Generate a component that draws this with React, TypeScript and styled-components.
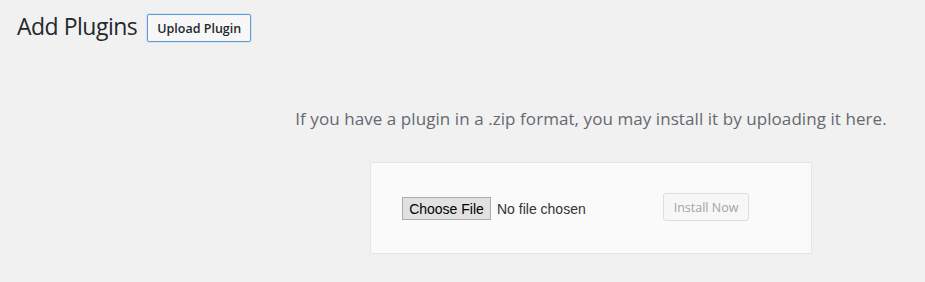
import React from "react";
import styled, { createGlobalStyle } from "styled-components";

const GlobalStyle = createGlobalStyle`
  html, body {
    margin: 0;
    padding: 0;
    background: #f1f1f1;
  }
  body {
    font-family: "Open Sans", "Noto Sans", sans-serif;
    color: #23282d;
  }
`;

const Page = styled.div`
  width: 925px;
  height: 282px;
  box-sizing: border-box;
  padding: 11px 0 0 17px;
  overflow: hidden;
`;

const TitleRow = styled.div`
  display: flex;
  align-items: flex-start;
  gap: 10px;
`;

const Title = styled.h1`
  margin: 0;
  font-size: 23px;
  font-weight: 400;
  line-height: 30px;
  color: #23282d;
  letter-spacing: -0.5px;
`;

const TitleAction = styled.button`
  font-family: "Open Sans", "Noto Sans", sans-serif;
  font-size: 12.5px;
  font-weight: 600;
  color: #23282d;
  background: #f7f7f7;
  border: 1px solid #5b9dd9;
  border-radius: 2px;
  height: 28px;
  margin-top: 3px;
  padding: 0 9px;
  box-shadow: 0 0 0 1px rgba(91, 157, 217, 0.15);
  cursor: pointer;
`;

const UploadSection = styled.section`
  margin-left: 240px;
  padding-top: 65px;
  display: flex;
  flex-direction: column;
  align-items: center;
`;

const Help = styled.p`
  margin: 0;
  font-size: 17px;
  line-height: 24px;
  color: #646970;
  letter-spacing: 0.07px;
  white-space: nowrap;
`;

const UploadForm = styled.form`
  margin-top: 31px;
  width: 442px;
  height: 92px;
  box-sizing: border-box;
  background: #fafafa;
  border: 1px solid #e5e5e5;
  padding: 0 62px 0 31px;
  display: flex;
  align-items: center;
  justify-content: space-between;
`;

const FileField = styled.div`
  display: flex;
  align-items: center;
  gap: 6px;
  font-family: "Liberation Sans", Arial, sans-serif;
  font-size: 14px;
`;

const FileButton = styled.button`
  font-family: "Liberation Sans", Arial, sans-serif;
  font-size: 14px;
  color: #000;
  background: #e1e1e1;
  border: 1px solid #adadad;
  border-radius: 0;
  height: 23px;
  width: 89px;
  padding: 0;
  margin-top: 1px;
`;

const FileStatus = styled.span`
  color: #333;
  margin-top: 1px;
`;

const SubmitButton = styled.button`
  font-family: "Open Sans", "Noto Sans", sans-serif;
  font-size: 12.5px;
  color: #a0a5aa;
  background: #f7f7f7;
  border: 1px solid #ddd;
  border-radius: 3px;
  height: 28px;
  width: 86px;
  padding: 0;
  margin-bottom: 2px;
`;

export default function App() {
  return (
    <>
      <GlobalStyle />
      <Page>
        <TitleRow>
          <Title>Add Plugins</Title>
          <TitleAction type="button">Upload Plugin</TitleAction>
        </TitleRow>
        <UploadSection>
          <Help>If you have a plugin in a .zip format, you may install it by uploading it here.</Help>
          <UploadForm onSubmit={(e) => e.preventDefault()}>
            <FileField>
              <FileButton type="button">Choose File</FileButton>
              <FileStatus>No file chosen</FileStatus>
            </FileField>
            <SubmitButton type="submit" disabled>
              Install Now
            </SubmitButton>
          </UploadForm>
        </UploadSection>
      </Page>
    </>
  );
}
